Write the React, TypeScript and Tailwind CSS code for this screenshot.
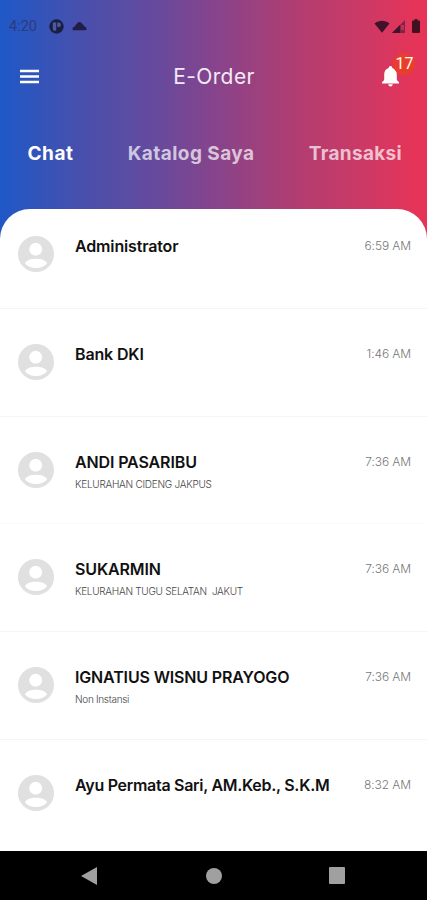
type Chat = {
  name: string;
  time: string;
  place?: string;
  nameClass: string;
  placeClass?: string;
};

const chats: Chat[] = [
  { name: 'Administrator', time: '6:59 AM', nameClass: 'tracking-[-0.150px]' },
  { name: 'Bank DKI', time: '1:46 AM', nameClass: 'tracking-[-0.150px]' },
  { name: 'ANDI PASARIBU', time: '7:36 AM', place: 'KELURAHAN CIDENG JAKPUS', nameClass: 'tracking-[-0.120px]', placeClass: 'tracking-[-0.260px]' },
  { name: 'SUKARMIN', time: '7:36 AM', place: 'KELURAHAN TUGU SELATAN  JAKUT', nameClass: 'tracking-[-0.130px]', placeClass: 'tracking-[-0.280px]' },
  { name: 'IGNATIUS WISNU PRAYOGO', time: '7:36 AM', place: 'Non Instansi', nameClass: 'tracking-[-0.150px]', placeClass: 'tracking-[-0.310px]' },
  { name: 'Ayu Permata Sari, AM.Keb., S.K.M', time: '8:32 AM', nameClass: 'tracking-[-0.290px]' },
];

function Avatar() {
  return (
    <svg className="h-9 w-9 shrink-0" viewBox="0 0 36 36">
      <circle cx="18" cy="18" r="18" fill="#e0e0e0" />
      <circle cx="17.700" cy="13.200" r="6.400" fill="#fff" />
      <path d="M7 27.200C8.400 23.900 13 22.700 18 22.700s9.600 1.200 11 4.500C27 30.200 23 32 18 32S9 30.200 7 27.200Z" fill="#fff" />
    </svg>
  );
}

function StatusBar() {
  return (
    <div className="flex h-[52px] items-center pl-[9px] pr-[7px]">
      <span className="w-[29px] whitespace-nowrap pt-[2px] font-['Roboto',sans-serif] text-[14.5px] leading-5 text-[#2b3b80]">4:20</span>
      <svg className="ml-[10.5px] h-[15px] w-[15px]" viewBox="0 0 15 15">
        <circle cx="7.500" cy="7.500" r="7.200" fill="#182042" />
        <path d="M3.800 3.500h3.400v8.200H5.500q-1.700 0-1.700-1.700ZM8.300 3.500h1.400q2.200 0 2.200 2.200t-2.200 2.200H8.300Z" fill="#5058a0" />
      </svg>
      <svg className="ml-[8px] h-[10px] w-[15px]" viewBox="0 0 15 10">
        <path d="M2 9.300C-.3 9 0 6.500 2.800 5.600 4.500 2.500 6 1 7.500 1s3 1.700 4.500 4C15.200 6.500 15.500 9 13 9.300Z" fill="#211d45" />
      </svg>
      <svg className="ml-auto h-[13px] w-[16px]" viewBox="0 0 16 13">
        <path d="M.5 3.500C5-.2 11-.2 15.500 3.500L8 12.700Z" fill="#40132a" />
      </svg>
      <svg className="ml-[2px] h-[13px] w-[13px]" viewBox="0 0 13 13">
        <path d="M0 13 13 0v13Z" fill="#7e2446" />
        <path d="M0 13 8 5v8Z" fill="#40132a" />
        <path d="M9 5h3v5H9Z" fill="#bd305a" />
      </svg>
      <svg className="ml-[7px] h-[14px] w-[8px]" viewBox="0 0 8 14">
        <path d="M2.500 0h3v1.500H7q1 0 1 1V13q0 1-1 1H1q-1 0-1-1V2.500q0-1 1-1h1.500Z" fill="#43101f" />
      </svg>
    </div>
  );
}

function TopBar() {
  return (
    <div className="grid h-12 grid-cols-3 items-center pl-5 pr-[27px]">
      <svg className="h-[15px] w-[19px]" viewBox="0 0 19 15">
        <path d="M0 2h19M0 7.500h19M0 13h19" stroke="#fff" strokeWidth="2.400" />
      </svg>
      <h1 className="justify-self-center whitespace-nowrap pl-[8px] pt-px font-['Inter',sans-serif] text-[21px] font-normal leading-6 tracking-[0.4px] text-[#f2eaf6]">E-Order</h1>
      <div className="relative justify-self-end">
        <svg className="h-[22px] w-[19px]" viewBox="0 0 19 22">
          <path d="M9.500 1c1.200 0 1.800.8 1.800 2 3 .9 4.500 3.300 4.500 6.300V15l2.200 2.300V18.500H1V17.300L3.200 15V9.300C3.200 6.300 4.700 3.900 7.700 3 7.700 1.800 8.300 1 9.500 1ZM7.200 19.300h4.600q-.3 2.200-2.300 2.200t-2.300-2.200Z" fill="#fff" />
        </svg>
        <span className="absolute -top-[12px] left-[12.5px] flex h-[22px] w-[22px] items-center justify-center rounded-full bg-[#eb3e2a] pb-px font-['Roboto',sans-serif] text-[16px] text-white">17</span>
      </div>
    </div>
  );
}

function Tabs() {
  return (
    <nav className="flex h-[109px] items-center justify-between pb-[2px] pl-[27.5px] pr-[25px] font-['Inter',sans-serif] text-[19px] font-bold leading-6 text-white/70">
      <span className="tracking-[0.500px] text-white">Chat</span>
      <span className="tracking-[0.430px]">Katalog Saya</span>
      <span className="tracking-[0.300px]">Transaksi</span>
    </nav>
  );
}

function ChatRow({ chat }: { chat: Chat }) {
  return (
    <li className="flex h-[107.7px] shrink-0 items-start border-b border-[#f5f5f5] pl-[18px] pr-4 pt-[35px] first:h-[100px] first:pt-[27px] last:border-0 nth-[3]:border-[#fbfbfb]">
      <Avatar />
      <div className="ml-[21px] whitespace-pre">
        <p className={`text-[16px] font-semibold leading-5 text-[#111] ${chat.nameClass}`}>{chat.name}</p>
        {chat.place && <p className={`mt-[4px] text-[10px] font-light leading-4 text-[#444] ${chat.placeClass}`}>{chat.place}</p>}
      </div>
      <time className="ml-auto whitespace-nowrap text-[12px] font-light leading-5 tracking-[-0.100px] text-[#777]">{chat.time}</time>
    </li>
  );
}

export default function App() {
  return (
    <div className="flex h-[900px] w-[427px] flex-col overflow-hidden bg-[linear-gradient(90deg,#1f58c7_0%,#4650ae_18%,#654a9e_36%,#86448c_50%,#b23d70_70%,#cc3966_85%,#e53458_97%)]">
      <StatusBar />
      <TopBar />
      <Tabs />
      <main className="min-h-0 flex-1 overflow-hidden rounded-t-[30px] bg-white font-['Inter',sans-serif]">
        <ul className="flex flex-col">
          {chats.map((chat) => (
            <ChatRow key={chat.name} chat={chat} />
          ))}
        </ul>
      </main>
      <footer className="flex h-[49px] shrink-0 items-center bg-black pl-[81px]">
        <svg className="h-[18px] w-4" viewBox="0 0 16 18"><path d="M0 9 16 0v18Z" fill="#a0a0a0" /></svg>
        <span className="ml-[109px] h-4 w-4 rounded-full bg-[#a0a0a0]" />
        <span className="ml-[107px] h-[17px] w-4 rounded-[1px] bg-[#a0a0a0]" />
      </footer>
    </div>
  );
}
